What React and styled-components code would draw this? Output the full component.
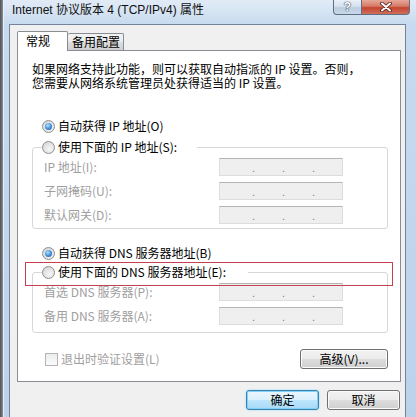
import styled, { createGlobalStyle, css } from 'styled-components';

const GlobalStyle = createGlobalStyle`
  html, body {
    margin: 0;
    padding: 0;
    width: 416px;
    height: 417px;
    overflow: hidden;
    background: #6e7378;
  }
  body {
    font-family: "Noto Sans CJK SC", "Noto Sans", sans-serif;
    font-size: 12px;
    color: #000;
  }
`;

const Screen = styled.div`
  display: flex;
  width: 416px;
  height: 417px;
  box-sizing: border-box;
  padding-left: 3px;
  background: linear-gradient(90deg, #4d5156 0, #8a8f94 3px);
`;

const Window = styled.div`
  flex: 1;
  display: flex;
  flex-direction: column;
  border-left: 1px solid #e6eef8;
  background: linear-gradient(180deg, #e1ebf6 0, #d3e2f2 14px, #c7daef 24px, #bcd2eb 100%);
`;

const TitleBar = styled.div`
  display: flex;
  justify-content: space-between;
  align-items: flex-start;
  height: 24px;
  padding: 0 6px 0 8px;
`;

const Title = styled.div`
  font-family: "Liberation Sans", "Noto Sans CJK SC", sans-serif;
  font-size: 12px;
  line-height: 20px;
  color: #111;
  white-space: nowrap;
`;

const Caption = styled.div`
  display: flex;
`;

const CaptionButton = styled.div`
  display: flex;
  align-items: center;
  justify-content: center;
  height: 15px;
  box-sizing: border-box;
  border: 1px solid #5f6f84;
  border-top: none;
  ${p =>
    p.$close
      ? css`
          width: 48px;
          border-left: none;
          border-radius: 0 0 4px 0;
          background: linear-gradient(180deg, #e7a99a 0%, #d57866 45%, #c4442f 55%, #d0705c 100%);
        `
      : css`
          width: 29px;
          border-radius: 0 0 0 4px;
          background: linear-gradient(180deg, #e9f0f8 0%, #d5e1ee 45%, #bdcde0 55%, #c9d8ea 100%);
        `}
`;

const Help = styled.span`
  font-family: "Liberation Sans", sans-serif;
  font-weight: bold;
  font-size: 12px;
  line-height: 12px;
  color: #fff;
  text-shadow: 0 0 1px #3d4c60, 0 0 1px #3d4c60, 0 0 1px #3d4c60;
`;

const Frame = styled.div`
  flex: 1;
  display: flex;
  padding: 0 10px 0 5px;
`;

const Client = styled.div`
  flex: 1;
  display: flex;
  flex-direction: column;
  border: 1px solid #72839a;
  border-bottom: none;
  background: #f0f0f0;
  padding: 6px 3px 0 7px;
`;

const Tabs = styled.div`
  display: flex;
  align-items: flex-end;
  height: 20px;
  margin-bottom: -1px;
  position: relative;
  z-index: 1;
`;

const Tab = styled.div`
  box-sizing: border-box;
  border: 1px solid #898c95;
  border-bottom: none;
  border-radius: 2px 2px 0 0;
  font-size: 12px;
  white-space: nowrap;
  line-height: 14px;
  ${p =>
    p.$active
      ? css`
          width: 51px;
          height: 20px;
          padding: 2px 0 0 8px;
          background: #fff;
        `
      : css`
          width: 56px;
          height: 17px;
          margin-bottom: 1px;
          border-left: none;
          padding: 1px 0 0 4px;
          background: linear-gradient(180deg, #f2f2f2 0%, #ebebeb 50%, #dddddd 51%, #cfcfcf 100%);
        `}
`;

const Panel = styled.div`
  position: relative;
  width: 384px;
  height: 332px;
  box-sizing: border-box;
  border: 1px solid #898c95;
  background: #fff;
  padding: 11px 12px 0 14px;
  display: flex;
  flex-direction: column;
`;

const Description = styled.p`
  margin: 0;
  line-height: 14px;
  white-space: nowrap;
`;

const RadioRow = styled.label`
  display: flex;
  align-items: center;
  gap: 3px;
  height: 14px;
  line-height: 14px;
  padding-left: ${p => p.$indent}px;
  margin-top: ${p => p.$top || 0}px;
  white-space: nowrap;
`;

const Radio = styled.span`
  position: relative;
  width: 13px;
  height: 13px;
  box-sizing: border-box;
  border-radius: 50%;
  border: 1px solid #8e8f8f;
  background: radial-gradient(circle at 60% 65%, #f6f6f6 0, #e2e2e2 55%, #cdcdcd 100%);
  flex: none;
  ${p =>
    p.$checked &&
    css`
      &::after {
        content: '';
        position: absolute;
        left: 2px;
        top: 2px;
        width: 7px;
        height: 7px;
        border-radius: 50%;
        background: radial-gradient(circle at 40% 35%, #b9e2fb 0, #4c9be0 45%, #1b4f9a 100%);
      }
    `}
`;

const Group = styled.fieldset`
  min-width: 0;
  margin: ${p => p.$top}px 0 0 0;
  padding: 4px 0 ${p => p.$bottom}px 11px;
  border: 1px solid #d8d8d8;
  border-radius: 3px;
  display: flex;
  flex-direction: column;
  gap: 6px;
`;

const Legend = styled.legend`
  margin-left: -2px;
  padding: 0 ${p => p.$gap}px 0 0;
`;

const FieldRow = styled.div`
  display: flex;
  align-items: center;
  height: 18px;
`;

const FieldLabel = styled.span`
  width: 175px;
  color: #a0a0a0;
  white-space: nowrap;
  line-height: 14px;
`;

const IpField = styled.div`
  display: flex;
  justify-content: space-evenly;
  align-items: flex-end;
  width: 124px;
  height: 18px;
  box-sizing: border-box;
  padding: 0 0 2px 5px;
  border: 1px solid #dcdcdc;
  border-top-color: #b5b5b5;
  background: #efefef;
`;

const Dot = styled.span`
  font-family: "Liberation Sans", sans-serif;
  font-size: 11px;
  line-height: 10px;
  color: #7c7c7c;
`;

const Highlight = styled.div`
  position: absolute;
  left: 7px;
  top: 211px;
  width: 368px;
  height: 24px;
  box-sizing: border-box;
  border: 1px solid #c7404f;
  pointer-events: none;
`;

const BottomRow = styled.div`
  display: flex;
  justify-content: space-between;
  align-items: center;
  margin-top: 16px;
  padding-left: 13px;
`;

const CheckRow = styled.label`
  display: flex;
  align-items: center;
  gap: 3px;
  color: #a0a0a0;
  white-space: nowrap;
  line-height: 14px;
`;

const CheckBox = styled.span`
  width: 13px;
  height: 13px;
  box-sizing: border-box;
  border: 1px solid #b4b4b4;
  background: linear-gradient(180deg, #ececec, #fbfbfb);
`;

const Button = styled.button`
  font-family: "Noto Sans CJK SC", sans-serif;
  font-size: 12px;
  line-height: 14px;
  color: #000;
  padding: 0;
  height: ${p => p.$h || 20}px;
  width: ${p => p.$w}px;
  border-radius: 3px;
  cursor: default;
  ${p =>
    p.$default
      ? css`
          border: 1px solid #3c7fb1;
          background: linear-gradient(180deg, #eaf6fd 0%, #d9f0fc 50%, #bee6fd 51%, #a7d9f5 100%);
          box-shadow: inset 0 0 0 1px #7fd3f7, 0 0 2px #8cd4f6;
        `
      : css`
          border: 1px solid #707070;
          background: linear-gradient(180deg, #f2f2f2 0%, #ebebeb 50%, #dddddd 51%, #cfcfcf 100%);
          box-shadow: inset 0 0 0 1px #fbfbfb;
        `}
`;

const Actions = styled.div`
  display: flex;
  justify-content: flex-end;
  gap: 8px;
  margin-top: 8px;
  padding-right: 2px;
`;

const CloseIcon = () => (
  <svg width="12" height="10" viewBox="0 0 12 10">
    <path d="M2 1.5 L10 8.5 M10 1.5 L2 8.5" stroke="#4a1f1a" strokeWidth="3.6" strokeLinecap="round" />
    <path d="M2 1.5 L10 8.5 M10 1.5 L2 8.5" stroke="#fff" strokeWidth="2" strokeLinecap="round" />
  </svg>
);

const IpRow = ({ label }) => (
  <FieldRow>
    <FieldLabel>{label}</FieldLabel>
    <IpField>
      <Dot>.</Dot>
      <Dot>.</Dot>
      <Dot>.</Dot>
    </IpField>
  </FieldRow>
);

const App = () => {
  return (
    <Screen>
      <GlobalStyle />
      <Window>
        <TitleBar>
          <Title>Internet 协议版本 4 (TCP/IPv4) 属性</Title>
          <Caption>
            <CaptionButton>
              <Help>?</Help>
            </CaptionButton>
            <CaptionButton $close>
              <CloseIcon />
            </CaptionButton>
          </Caption>
        </TitleBar>
        <Frame>
          <Client>
            <Tabs>
              <Tab $active>常规</Tab>
              <Tab>备用配置</Tab>
            </Tabs>
            <Panel>
              <Description>
                如果网络支持此功能，则可以获取自动指派的 IP 设置。否则，
                <br />
                您需要从网络系统管理员处获得适当的 IP 设置。
              </Description>

              <RadioRow $indent={10} $top={29}>
                <Radio $checked />
                自动获得 IP 地址(O)
              </RadioRow>

              <Group $top={7} $bottom={4}>
                <Legend $gap={20}>
                  <RadioRow $indent={0}>
                    <Radio />
                    使用下面的 IP 地址(S):
                  </RadioRow>
                </Legend>
                <IpRow label="IP 地址(I):" />
                <IpRow label="子网掩码(U):" />
                <IpRow label="默认网关(D):" />
              </Group>

              <RadioRow $indent={10} $top={17}>
                <Radio $checked />
                自动获得 DNS 服务器地址(B)
              </RadioRow>

              <Group $top={5} $bottom={7}>
                <Legend $gap={22}>
                  <RadioRow $indent={0}>
                    <Radio />
                    使用下面的 DNS 服务器地址(E):
                  </RadioRow>
                </Legend>
                <IpRow label="首选 DNS 服务器(P):" />
                <IpRow label="备用 DNS 服务器(A):" />
              </Group>

              <Highlight />

              <BottomRow>
                <CheckRow>
                  <CheckBox />
                  退出时验证设置(L)
                </CheckRow>
                <Button $w={88} $h={20}>高级(V)...</Button>
              </BottomRow>
            </Panel>
            <Actions>
              <Button $w={73} $default>确定</Button>
              <Button $w={73}>取消</Button>
            </Actions>
          </Client>
        </Frame>
      </Window>
    </Screen>
  );
};

export default App;
